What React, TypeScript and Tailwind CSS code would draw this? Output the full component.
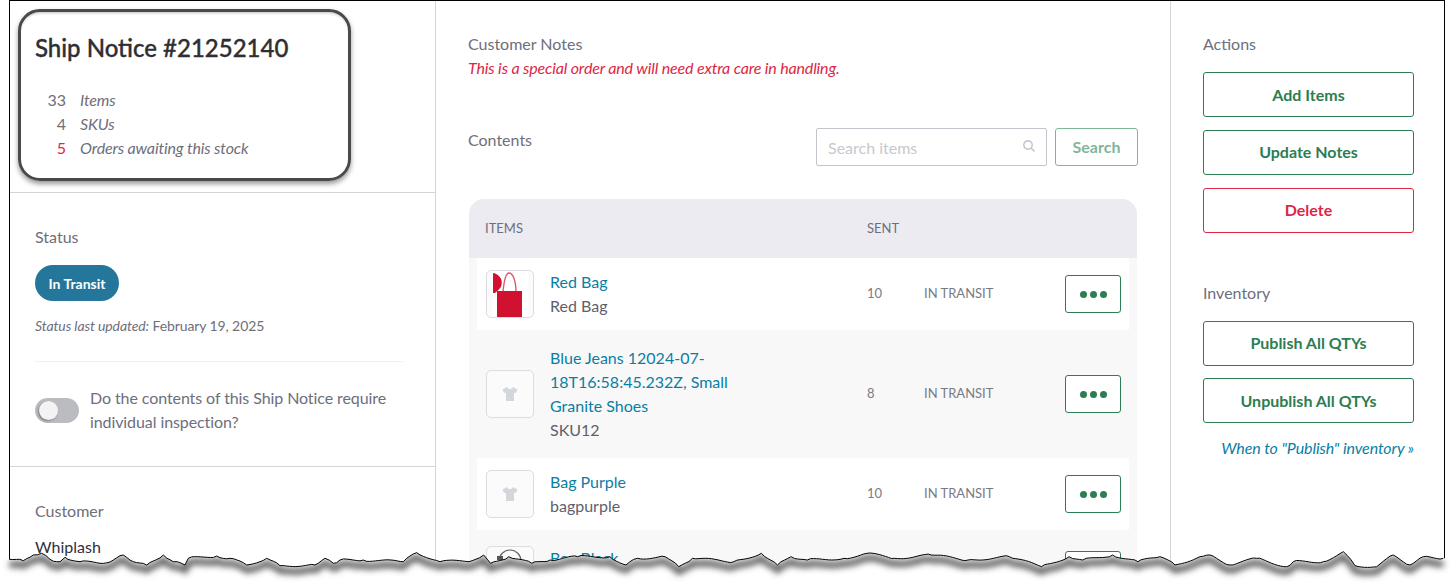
import React from "react";

const tear: [number, number][] = [
  [28,1078],[70,1082],[100,1065],[125,1060],[150,1078],[180,1085],[195,1072],[240,1085],[300,1090],[340,1080],[370,1065],[400,1085],[440,1095],[490,1065],[520,1085],[555,1095],[565,1075],[650,1068],[690,1075],[740,1095],[800,1075],[840,1097],[945,1095],[975,1075],[1000,1090],[1020,1080],[1090,1080],[1210,1085],[1250,1058],
].map(([x, y]) => [x / 3, y / 3 + 200] as [number, number]).concat(
  [[0,665],[70,662],[95,645],[110,670],[150,650],[200,670],[240,660],[300,650],[370,650],[405,675],[430,655],[490,650],[520,680],[550,655],[640,665],[700,640],[735,675],[765,650],[800,660],[880,655],[930,640],[990,655],[1070,645],[1150,660],[1240,650],[1310,680],[1370,650],[1400,660],[1465,645],[1520,665],[1568,650]].map(([x, y]) => [x / 2.178 + 440, y / 3 + 340] as [number, number]),
  [[0,770],[45,795],[120,770],[150,765],[210,795],[290,775],[380,800],[400,785],[490,785],[550,755],[585,797],[650,800],[700,765],[750,795],[790,770],[850,775]].map(([x, y]) => [x / 3 + 1160, y / 3 + 300] as [number, number])
);

function tearPath() {
  const out: string[] = [];
  tear.forEach(([x, y], i) => {
    if (i > 0) {
      const [px, py] = tear[i - 1];
      const n = Math.max(1, Math.floor((x - px) / 3));
      for (let k = 1; k < n; k++) {
        const t = k / n;
        const j = Math.sin(k * 12.9898 + i * 78.233) * 1.2;
        out.push(`${(px + (x - px) * t).toFixed(1)},${(py + (y - py) * t + j).toFixed(1)}`);
      }
    }
    out.push(`${x.toFixed(1)},${y.toFixed(1)}`);
  });
  return out.join(" L");
}

const line = tearPath();

function TornEdge() {
  return (
    <svg className="absolute left-0 top-0 pointer-events-none" width="1454" height="587" viewBox="0 0 1454 587">
      <defs>
        <clipPath id="below">
          <path d={`M0,587 L0,560 L${line} L1454,558 L1454,587 Z`} />
        </clipPath>
        <filter id="soft" x="-5%" y="-200%" width="110%" height="500%">
          <feGaussianBlur stdDeviation="3" />
        </filter>
      </defs>
      <path d={`M0,587 L0,560 L${line} L1454,558 L1454,587 Z`} fill="#ffffff" />
      <g clipPath="url(#below)">
        <path d={`M${line}`} transform="translate(0,5)" fill="none" stroke="#555555" strokeWidth="6" filter="url(#soft)" />
      </g>
      <path d={`M${line}`} fill="none" stroke="#000000" strokeWidth="1" />
    </svg>
  );
}

function Shirt() {
  return (
    <svg width="18" height="18" viewBox="0 0 18 18">
      <path d="M6 2 L1.5 4.5 L3 8 L5 7.5 L5 16 L13 16 L13 7.5 L15 8 L16.5 4.5 L12 2 C11.5 3.5 10.3 4 9 4 C7.7 4 6.5 3.5 6 2 Z" fill="#d3d6da" />
    </svg>
  );
}

function RedBag() {
  return (
    <svg width="46" height="46" viewBox="0 0 46 46">
      <rect x="5" y="0" width="36" height="46" fill="#ffffff" />
      <path d="M6 2 C12 3 16 8 14.5 14 C13.5 18 10 20 8 22 L6 22 Z" fill="#d0112f" />
      <path d="M16 21 C17 10 19 2 22 2 C26 2 29 10 29 21" fill="none" stroke="#e0566c" strokeWidth="1.4" />
      <rect x="10" y="20" width="25" height="26" fill="#d0112f" />
    </svg>
  );
}

function BlackBag() {
  return (
    <svg width="46" height="46" viewBox="0 0 46 46">
      <circle cx="23" cy="14" r="11" fill="none" stroke="#666666" strokeWidth="1.2" />
      <rect x="10" y="9" width="6" height="4" fill="#555555" />
    </svg>
  );
}

function Thumb({ children }: { children: React.ReactNode }) {
  return (
    <div className="w-[48px] h-[48px] shrink-0 border border-[#dcdde0] rounded-[5px] bg-[#fbfbfb] flex items-center justify-center overflow-hidden">
      {children}
    </div>
  );
}

function Row({ white, h, thumb, title, sub, sent }: { white?: boolean; h: string; thumb: React.ReactNode; title: React.ReactNode; sub?: string; sent: string }) {
  return (
    <div className={`${h} flex items-center pl-[9px] pr-[8px] ${white ? "bg-white" : ""}`}>
      <Thumb>{thumb}</Thumb>
      <div className="ml-[16px] w-[317px] text-[16px] leading-[24px]">
        <div className="text-[#0b7ea3] w-[200px]">{title}</div>
        {sub ? <div className="text-[#5f5f6b]">{sub}</div> : <div className="h-[24px]" />}
      </div>
      <div className="w-[57px] pb-[2px] text-[13px] text-[#7a7a85]">{sent}</div>
      <div className="w-[141px] pb-[2px] text-[13px] text-[#7a7a85]">IN TRANSIT</div>
      <button className="w-[56px] h-[38px] border border-[#2c7d52] rounded-[3px] bg-white flex items-center justify-center gap-[3px]">
        <span className="w-[7px] h-[7px] rounded-full bg-[#2c7d52]" />
        <span className="w-[7px] h-[7px] rounded-full bg-[#2c7d52]" />
        <span className="w-[7px] h-[7px] rounded-full bg-[#2c7d52]" />
      </button>
    </div>
  );
}

function ActionButton({ children, red, lift }: { children: React.ReactNode; red?: boolean; lift?: boolean }) {
  return (
    <button className={`w-[211px] h-[45px] border rounded-[3px] bg-white text-[16px] font-bold ${lift ? "pb-[2px]" : ""} ${red ? "border-[#dc2845] text-[#dc2845]" : "border-[#2c7d52] text-[#2c7d52]"}`}>
      {children}
    </button>
  );
}

export default function App() {
  return (
    <div className="relative w-[1454px] h-[587px] overflow-hidden bg-white text-[16px] leading-[24px] text-[#6e6e7c]" style={{ fontFamily: '"Lato", "Liberation Sans", sans-serif' }}>
      <div className="ml-[9px] w-[1436px] h-[587px] border-x border-t border-black flex">
        {/* left column */}
        <div className="w-[426px] shrink-0 border-r border-[#d5d5d8]">
          <div className="h-[192px] border-b border-[#d5d5d8] pl-[25px] pt-[32px]">
            <h1 className="text-[24px] leading-[30px] font-medium text-[#2f2f33] [-webkit-text-stroke:0.35px_#2f2f33]">Ship Notice #21252140</h1>
            <div className="mt-[25px] grid grid-cols-[31px_1fr] gap-x-[14px]">
              <div className="text-right">33</div><div className="italic tracking-[-0.15px]">Items</div>
              <div className="text-right">4</div><div className="italic tracking-[-0.15px]">SKUs</div>
              <div className="text-right text-[#dc2845]">5</div><div className="italic tracking-[-0.15px]">Orders awaiting this stock</div>
            </div>
          </div>
          <div className="h-[274px] border-b border-[#d5d5d8] pl-[25px] pr-[32px] pt-[32px]">
            <div>Status</div>
            <div className="mt-[16px] w-[84px] h-[36px] pt-[1px] rounded-full bg-[#24769a] text-white text-[14px] font-bold flex items-center justify-center">In Transit</div>
            <div className="mt-[13px] text-[14px] tracking-[-0.1px]"><span className="italic">Status last updated:</span> February 19, 2025</div>
            <div className="mt-[23px] h-[1px] bg-[#f0f0f1]" />
            <div className="mt-[24px] flex items-center">
              <div className="relative w-[44px] h-[25px] shrink-0 rounded-full bg-[#bbbcc0]">
                <div className="absolute left-[4px] top-[3px] w-[19px] h-[19px] rounded-full bg-[#f3f3f3] shadow-[-1px_1px_2px_rgba(0,0,0,0.35)]" />
              </div>
              <div className="ml-[11px] w-[310px] tracking-[-0.09px]">Do the contents of this Ship Notice require individual inspection?</div>
            </div>
          </div>
          <div className="pl-[25px] pt-[32px]">
            <div>Customer</div>
            <div className="mt-[12px] text-[#2f2f3f]">Whiplash</div>
          </div>
        </div>

        {/* center column */}
        <div className="w-[735px] shrink-0 border-r border-[#d5d5d8] pl-[32px] pr-[32px] pt-[31px]">
          <div>Customer Notes</div>
          <div className="italic text-[#dc2845] tracking-[-0.16px]">This is a special order and will need extra care in handling.</div>
          <div className="mt-[48px] flex items-start justify-between">
            <div>Contents</div>
            <div className="flex gap-[8px]">
              <div className="w-[231px] h-[38px] border border-[#c4c4cc] rounded-[2px] flex items-center justify-between pl-[11px] pr-[10px] pt-[1px]">
                <span className="text-[#c8c8ce]">Search items</span>
                <svg width="14" height="14" viewBox="0 0 14 14" className="-mt-[3px]" fill="none" stroke="#c2c2c8" strokeWidth="1.4">
                  <circle cx="6" cy="6" r="4.2" />
                  <path d="M9 9 L12.5 12.5" />
                </svg>
              </div>
              <button className="w-[83px] h-[38px] border border-[#7fb69a] rounded-[3px] text-[#7fb69a] text-[16px] font-bold">Search</button>
            </div>
          </div>
          <div className="mt-[33px] ml-[1px] w-[668px] bg-[#f8f8f8] rounded-t-[15px]">
            <div className="h-[59px] pb-[2px] bg-[#ecebf1] rounded-t-[15px] pl-[16px] flex items-center text-[13px]">
              <div className="w-[382px]">ITEMS</div>
              <div>SENT</div>
            </div>
            <div className="px-[8px]">
              <Row white h="h-[72px]" thumb={<RedBag />} title="Red Bag" sub="Red Bag" sent="10" />
              <Row h="h-[128px]" thumb={<Shirt />} title="Blue Jeans 12024-07-18T16:58:45.232Z, Small Granite Shoes" sub="SKU12" sent="8" />
              <Row white h="h-[72px]" thumb={<Shirt />} title="Bag Purple" sub="bagpurple" sent="10" />
              <Row h="h-[80px]" thumb={<BlackBag />} title="Bag Black" sent="" />
            </div>
          </div>
        </div>

        {/* right column */}
        <div className="flex-1 pl-[32px] pt-[31px]">
          <div>Actions</div>
          <div className="mt-[16px] flex flex-col gap-[13px]">
            <ActionButton>Add Items</ActionButton>
            <ActionButton lift>Update Notes</ActionButton>
            <ActionButton red lift>Delete</ActionButton>
          </div>
          <div className="mt-[48px]">Inventory</div>
          <div className="mt-[16px] flex flex-col gap-[12px]">
            <ActionButton lift>Publish All QTYs</ActionButton>
            <ActionButton>Unpublish All QTYs</ActionButton>
          </div>
          <div className="mt-[13px] w-[211px] text-right italic text-[#0b7ea3] tracking-[-0.1px]">When to "Publish" inventory »</div>
        </div>
      </div>

      {/* annotation highlight */}
      <div className="absolute left-[18px] top-[9px] w-[333px] h-[172px] rounded-[22px] border-[3px] border-[#4a4a4a] shadow-[0_3px_5px_rgba(0,0,0,0.4),inset_0_3px_3px_-2px_rgba(0,0,0,0.25)] pointer-events-none" />
      <TornEdge />
    </div>
  );
}
